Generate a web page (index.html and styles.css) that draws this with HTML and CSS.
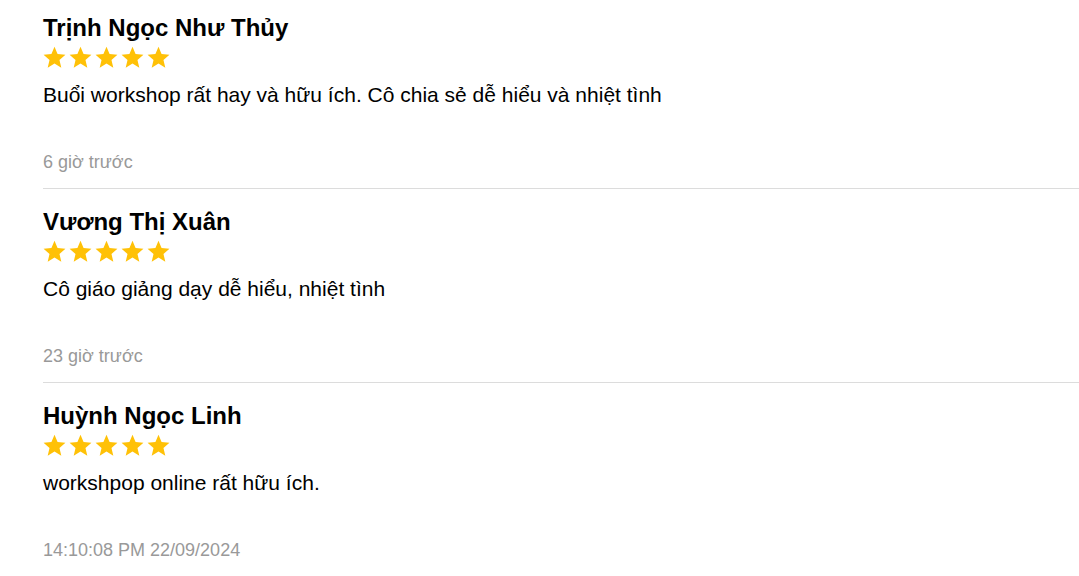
FILE: index.html
```html
<!DOCTYPE html>
<html lang="vi">
<head>
<meta charset="utf-8">
<title>Đánh giá</title>
<link rel="stylesheet" href="styles.css">
</head>
<body>
<div class="reviews">
  <div class="review">
    <div class="name">Trịnh Ngọc Như Thủy</div>
    <div class="stars">
      <svg viewBox="0 0 24 24"><polygon points="12,0.8 15.2,8.4 23.4,9.1 17.2,14.5 19.1,22.6 12,18.3 4.9,22.6 6.8,14.5 0.6,9.1 8.8,8.4"/></svg>
      <svg viewBox="0 0 24 24"><polygon points="12,0.8 15.2,8.4 23.4,9.1 17.2,14.5 19.1,22.6 12,18.3 4.9,22.6 6.8,14.5 0.6,9.1 8.8,8.4"/></svg>
      <svg viewBox="0 0 24 24"><polygon points="12,0.8 15.2,8.4 23.4,9.1 17.2,14.5 19.1,22.6 12,18.3 4.9,22.6 6.8,14.5 0.6,9.1 8.8,8.4"/></svg>
      <svg viewBox="0 0 24 24"><polygon points="12,0.8 15.2,8.4 23.4,9.1 17.2,14.5 19.1,22.6 12,18.3 4.9,22.6 6.8,14.5 0.6,9.1 8.8,8.4"/></svg>
      <svg viewBox="0 0 24 24"><polygon points="12,0.8 15.2,8.4 23.4,9.1 17.2,14.5 19.1,22.6 12,18.3 4.9,22.6 6.8,14.5 0.6,9.1 8.8,8.4"/></svg>
    </div>
    <div class="text">Buổi workshop rất hay và hữu ích. Cô chia sẻ dễ hiểu và nhiệt tình</div>
    <div class="time">6 giờ trước</div>
  </div>
  <div class="review">
    <div class="name">Vương Thị Xuân</div>
    <div class="stars">
      <svg viewBox="0 0 24 24"><polygon points="12,0.8 15.2,8.4 23.4,9.1 17.2,14.5 19.1,22.6 12,18.3 4.9,22.6 6.8,14.5 0.6,9.1 8.8,8.4"/></svg>
      <svg viewBox="0 0 24 24"><polygon points="12,0.8 15.2,8.4 23.4,9.1 17.2,14.5 19.1,22.6 12,18.3 4.9,22.6 6.8,14.5 0.6,9.1 8.8,8.4"/></svg>
      <svg viewBox="0 0 24 24"><polygon points="12,0.8 15.2,8.4 23.4,9.1 17.2,14.5 19.1,22.6 12,18.3 4.9,22.6 6.8,14.5 0.6,9.1 8.8,8.4"/></svg>
      <svg viewBox="0 0 24 24"><polygon points="12,0.8 15.2,8.4 23.4,9.1 17.2,14.5 19.1,22.6 12,18.3 4.9,22.6 6.8,14.5 0.6,9.1 8.8,8.4"/></svg>
      <svg viewBox="0 0 24 24"><polygon points="12,0.8 15.2,8.4 23.4,9.1 17.2,14.5 19.1,22.6 12,18.3 4.9,22.6 6.8,14.5 0.6,9.1 8.8,8.4"/></svg>
    </div>
    <div class="text">Cô giáo giảng dạy dễ hiểu, nhiệt tình</div>
    <div class="time">23 giờ trước</div>
  </div>
  <div class="review">
    <div class="name">Huỳnh Ngọc Linh</div>
    <div class="stars">
      <svg viewBox="0 0 24 24"><polygon points="12,0.8 15.2,8.4 23.4,9.1 17.2,14.5 19.1,22.6 12,18.3 4.9,22.6 6.8,14.5 0.6,9.1 8.8,8.4"/></svg>
      <svg viewBox="0 0 24 24"><polygon points="12,0.8 15.2,8.4 23.4,9.1 17.2,14.5 19.1,22.6 12,18.3 4.9,22.6 6.8,14.5 0.6,9.1 8.8,8.4"/></svg>
      <svg viewBox="0 0 24 24"><polygon points="12,0.8 15.2,8.4 23.4,9.1 17.2,14.5 19.1,22.6 12,18.3 4.9,22.6 6.8,14.5 0.6,9.1 8.8,8.4"/></svg>
      <svg viewBox="0 0 24 24"><polygon points="12,0.8 15.2,8.4 23.4,9.1 17.2,14.5 19.1,22.6 12,18.3 4.9,22.6 6.8,14.5 0.6,9.1 8.8,8.4"/></svg>
      <svg viewBox="0 0 24 24"><polygon points="12,0.8 15.2,8.4 23.4,9.1 17.2,14.5 19.1,22.6 12,18.3 4.9,22.6 6.8,14.5 0.6,9.1 8.8,8.4"/></svg>
    </div>
    <div class="text">workshpop online rất hữu ích.</div>
    <div class="time">14:10:08 PM 22/09/2024</div>
  </div>
</div>
</body>
</html>
```
FILE: styles.css
```css
html, body {
  margin: 0;
  padding: 0;
  background: #fff;
}
body {
  font-family: "Liberation Sans", Arial, sans-serif;
  color: #000;
  overflow: hidden;
}
.reviews {
  margin-left: 43px;
  display: flex;
  flex-direction: column;
}
.review {
  display: flex;
  flex-direction: column;
  padding: 19px 0 15px;
  border-bottom: 1px solid #dcdcdc;
}
.review:first-child {
  padding-top: 14px;
}
.name {
  font-size: 24px;
  font-weight: bold;
  line-height: 28px;
}
.stars {
  display: flex;
  gap: 3px;
  margin-top: 4px;
  height: 23px;
}
.stars svg {
  width: 23px;
  height: 23px;
  fill: #ffc107;
}
.text {
  margin-top: 14px;
  font-size: 21px;
  line-height: 24px;
}
.time {
  margin-top: 44px;
  font-size: 18px;
  line-height: 22px;
  color: #999;
}
```
